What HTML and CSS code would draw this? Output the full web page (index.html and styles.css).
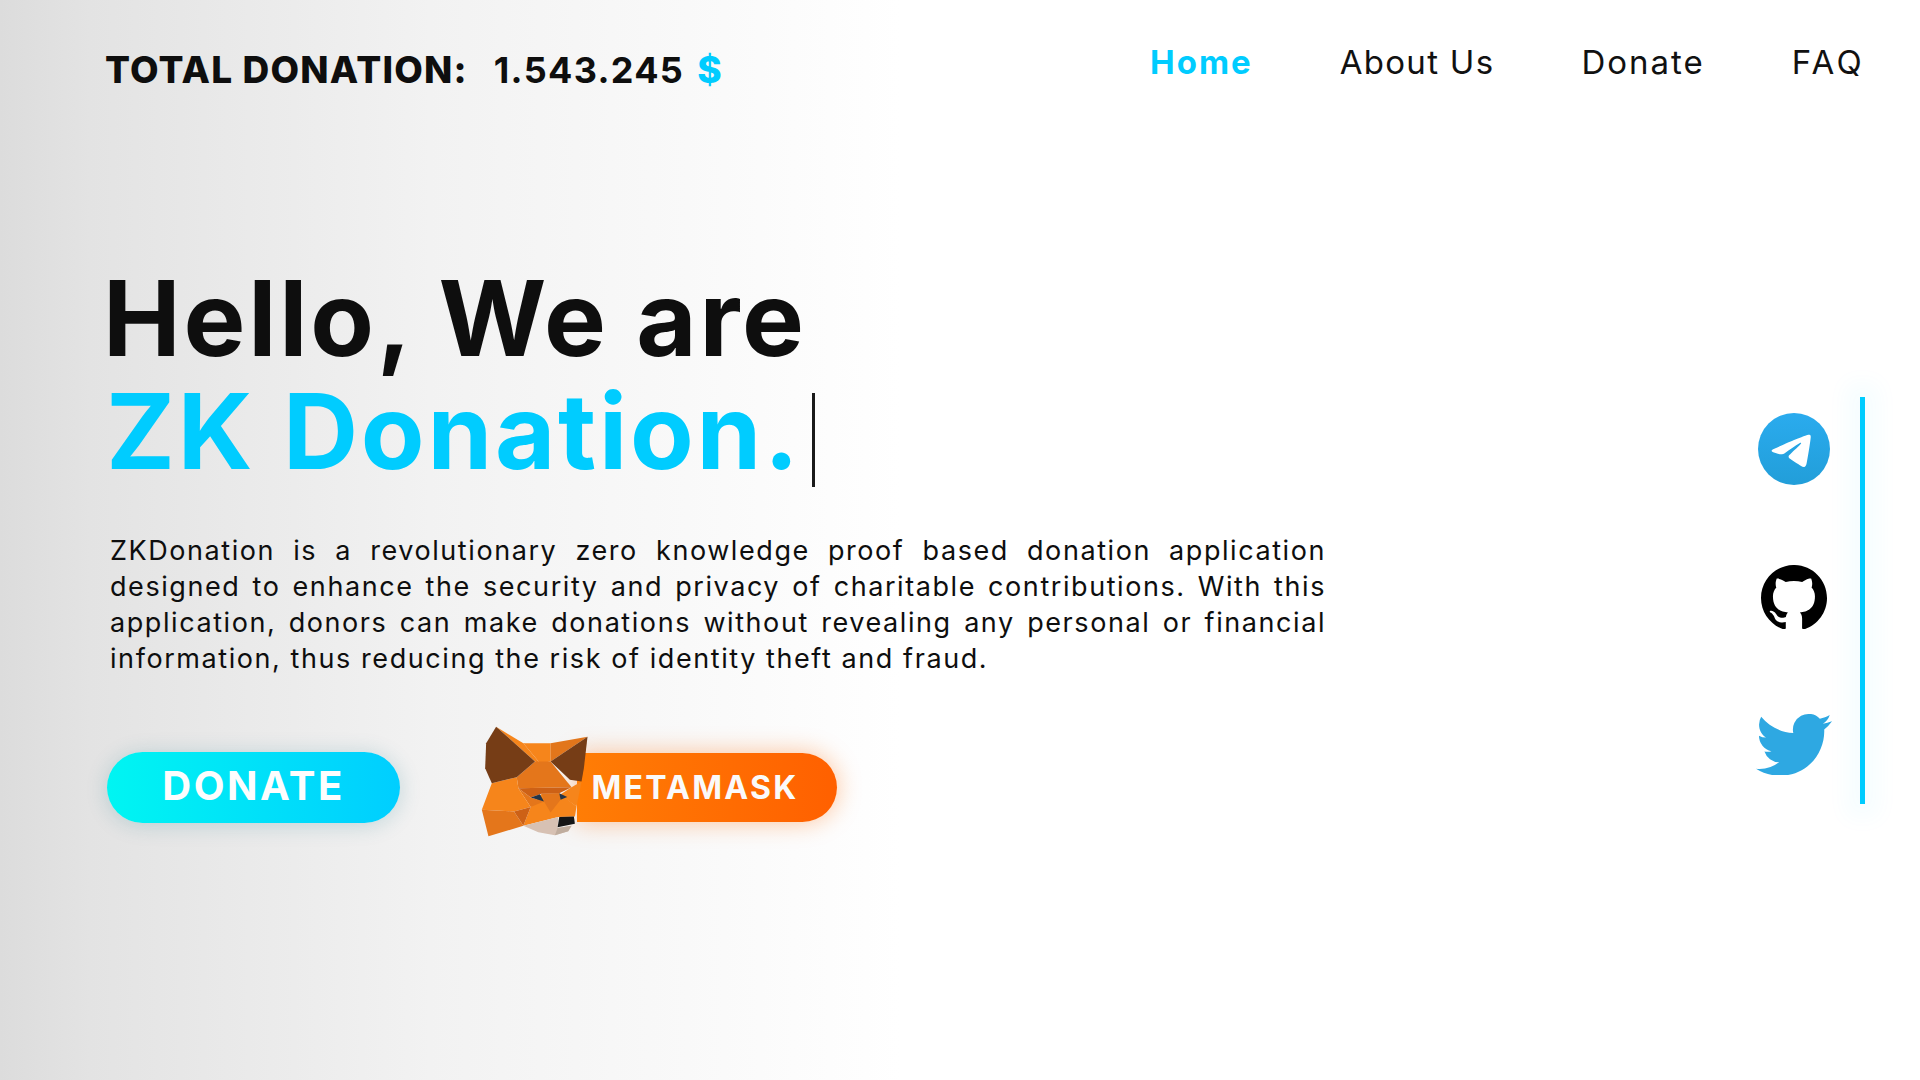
FILE: index.html
```html
<!DOCTYPE html>
<html lang="en">
<head>
<meta charset="utf-8">
<title>ZK Donation</title>
<link rel="stylesheet" href="styles.css">
</head>
<body>
<div class="page">
  <header class="topbar">
    <div class="total"><span class="total-label">TOTAL DONATION:</span><span class="total-value">1.543.245</span><span class="accent total-cur">$</span></div>
    <nav class="nav">
      <a class="nav-link is-active">Home</a>
      <a class="nav-link">About Us</a>
      <a class="nav-link nav-link-donate">Donate</a>
      <a class="nav-link nav-link-faq">FAQ</a>
    </nav>
  </header>
  <div class="hero">
    <main class="hero-main">
      <h1 class="title">Hello, We are<br><span class="accent title-second">ZK Donation.</span><span class="caret"></span></h1>
      <p class="lead">ZKDonation is a revolutionary zero knowledge proof based donation application designed to enhance the security and privacy of charitable contributions. With this application, donors can make donations without revealing any personal or financial information, thus reducing the risk of identity theft and fraud.</p>
      <div class="actions">
        <a class="btn-donate"><span class="btn-donate-label">DONATE</span></a>
        <div class="mm">
          <svg class="fox" viewBox="60 75 330 340" aria-hidden="true">
            <polygon fill="#f6851b" points="108,80 190,130 240,190 225,185"/>
            <polygon fill="#f6851b" points="190,130 272,130 272,185 240,190"/>
            <polygon fill="#e2761b" points="272,130 383,110 272,185"/>
            <polygon fill="#e4761b" points="225,185 272,185 335,262 175,265 170,232"/>
            <polygon fill="#f6851b" points="335,262 365,245 350,320 300,285"/>
            <polygon fill="#f6851b" points="212,322 245,282 298,280 350,320 345,350 295,352 190,378"/>
            <polygon fill="#e4761b" points="175,265 212,293 252,305 212,322"/>
            <polygon fill="#e4761b" points="245,282 298,280 302,300 272,338 252,305"/>
            <polygon fill="#cd6116" points="175,265 335,262 298,280 245,282 212,293"/>
            <polygon fill="#f6851b" points="95,250 170,232 175,265 212,322 162,335 65,330"/>
            <polygon fill="#e4761b" points="65,330 162,335 190,378 85,410"/>
            <polygon fill="#cd6116" points="162,335 212,322 190,378"/>
            <polygon fill="#763d16" points="108,80 225,185 170,232 95,250 85,228 75,205 78,130"/>
            <polygon fill="#763d16" points="383,110 272,185 330,240 365,245 372,205"/>
            <polygon fill="#233447" points="212,293 240,283 252,305"/>
            <polygon fill="#233447" points="298,280 322,292 302,300"/>
            <polygon fill="#d7c1b3" points="190,378 295,352 293,385 335,378 325,395 285,407 235,398"/>
            <polygon fill="#c0ad9e" points="293,385 335,378 325,395 285,407"/>
            <polygon fill="#161616" points="298,352 342,350 345,372 293,383"/>
          </svg>
          <a class="btn-mm">METAMASK</a>
        </div>
      </div>
    </main>
    <aside class="socials">
      <div class="social-icons">
      <svg class="ico-tg" viewBox="0 0 240 240" aria-hidden="true">
        <defs><linearGradient id="tg" x1="0" y1="0" x2="0" y2="1"><stop offset="0" stop-color="#2aabee"/><stop offset="1" stop-color="#229ed9"/></linearGradient></defs>
        <circle cx="120" cy="120" r="120" fill="url(#tg)"/>
        <path fill="#fff" d="M54.3 118.8c35-15.2 58.3-25.3 70-30.2 33.3-13.9 40.3-16.3 44.8-16.4 1 0 3.2.2 4.7 1.4 1.2 1 1.5 2.3 1.7 3.3s.4 3.1.2 4.7c-1.8 19-9.6 65.1-13.6 86.3-1.7 9-5 12-8.2 12.3-7 .6-12.3-4.6-19-9-10.6-6.9-16.5-11.2-26.8-18-11.9-7.8-4.2-12.1 2.6-19.1 1.8-1.8 32.5-29.8 33.1-32.3.1-.3.1-1.5-.6-2.1-.7-.6-1.7-.4-2.5-.2-1.1.2-17.9 11.4-50.6 33.5-4.8 3.3-9.1 4.9-13 4.8-4.3-.1-12.5-2.4-18.7-4.4-7.5-2.4-13.5-3.7-13-7.9.3-2.2 3.3-4.4 8.9-6.7z"/>
      </svg>
      <svg class="ico-gh" viewBox="0 0.3 24 23.3" preserveAspectRatio="xMidYMin slice" aria-hidden="true">
        <path fill="#000" d="M12 .297c-6.63 0-12 5.373-12 12 0 5.303 3.438 9.8 8.205 11.385.6.113.82-.258.82-.577 0-.285-.01-1.04-.015-2.04-3.338.724-4.042-1.61-4.042-1.61C4.422 18.07 3.633 17.7 3.633 17.7c-1.087-.744.084-.729.084-.729 1.205.084 1.838 1.236 1.838 1.236 1.07 1.835 2.809 1.305 3.495.998.108-.776.417-1.305.76-1.605-2.665-.3-5.466-1.332-5.466-5.93 0-1.31.465-2.38 1.235-3.22-.135-.303-.54-1.523.105-3.176 0 0 1.005-.322 3.3 1.23.96-.267 1.98-.399 3-.405 1.02.006 2.04.138 3 .405 2.28-1.552 3.285-1.23 3.285-1.23.645 1.653.24 2.873.12 3.176.765.84 1.23 1.91 1.23 3.22 0 4.61-2.805 5.625-5.475 5.92.42.36.81 1.096.81 2.22 0 1.606-.015 2.896-.015 3.286 0 .315.21.69.825.57C20.565 22.092 24 17.592 24 12.297c0-6.627-5.373-12-12-12"/>
      </svg>
      <svg class="ico-tw" viewBox="0 2 24 19.5" aria-hidden="true">
        <path fill="#2ea8e2" d="M23.953 4.57a10 10 0 01-2.825.775 4.958 4.958 0 002.163-2.723c-.951.555-2.005.959-3.127 1.184a4.92 4.92 0 00-8.384 4.482C7.69 8.095 4.067 6.13 1.64 3.162a4.822 4.822 0 00-.666 2.475c0 1.71.87 3.213 2.188 4.096a4.904 4.904 0 01-2.228-.616v.06a4.923 4.923 0 003.946 4.827 4.996 4.996 0 01-2.212.085 4.936 4.936 0 004.604 3.417 9.867 9.867 0 01-6.102 2.105c-.39 0-.779-.023-1.17-.067a13.995 13.995 0 007.557 2.209c9.053 0 13.998-7.496 13.998-13.985 0-.21 0-.42-.015-.63A9.935 9.935 0 0024 4.59z"/>
      </svg>
      </div>
      <div class="rail-line"></div>
    </aside>
  </div>
</div>
</body>
</html>
```
FILE: styles.css
```css
* { box-sizing: border-box; }
html, body { margin: 0; height: 100%; }
body {
  font-family: Inter, "Liberation Sans", sans-serif;
  color: #0e0e0e;
  background: linear-gradient(90deg, #dcdcdc 0, #e3e3e3 90px, #f2f2f2 430px, #fbfbfb 760px, #ffffff 900px);
  overflow: hidden;
}
.page { width: 1920px; height: 1080px; display: flex; flex-direction: column; }
.accent { color: #00ccff; }

.topbar { display: flex; justify-content: space-between; align-items: flex-start; padding: 41px 55px 0 105px; height: 262px; }
.total { display: flex; align-items: center; font-weight: 800; font-size: 37px; margin-top: 6px; }
.total-label { letter-spacing: 1.2px; }
.total-value { margin-left: 26px; font-size: 36px; font-weight: 700; letter-spacing: 1.3px; }
.total-cur { margin-left: 13px; font-size: 37px; font-weight: 800; }
.nav { display: flex; gap: 87px; font-size: 33px; line-height: 42px; }
.nav-link { color: #111; letter-spacing: 1.3px; }
.nav-link-donate { letter-spacing: 2px; }
.nav-link-faq { letter-spacing: 3.3px; }
.nav-link.is-active { color: #00ccff; font-weight: 700; letter-spacing: 2px; }

.hero { flex: 1; display: flex; justify-content: space-between; align-items: flex-start; padding-right: 55px; }
.hero-main { padding-left: 103px; }
.title { margin: 0; font-size: 104px; line-height: 113px; font-weight: 700; letter-spacing: 2.8px; }
.title-second { padding-left: 3px; }
.caret { display: inline-block; width: 3px; height: 94px; margin-left: 10px; background: #1a1a1a; vertical-align: -18px; }
.lead { width: 1216px; margin: 45px 0 0 7px; font-size: 27px; line-height: 36px; letter-spacing: 1.57px; text-align: justify; }

.actions { display: flex; align-items: center; margin: 75px 0 0 4px; }
.btn-donate { display: flex; align-items: center; justify-content: center; width: 293px; height: 71px; border-radius: 36px; background: linear-gradient(90deg, #00f5f2, #00ceff); color: #fdfdfd; font-size: 40px; font-weight: 700; letter-spacing: 2.5px; box-shadow: 0 2px 22px rgba(0, 110, 130, 0.2); }
.btn-donate-label { margin-bottom: 4px; }
.mm { position: relative; margin-left: 177px; }
.btn-mm { display: flex; align-items: center; justify-content: center; width: 260px; height: 69px; padding-right: 24px; border-radius: 0 35px 35px 0; background: linear-gradient(90deg, #ff7d05, #ff6000); color: #fafafa; font-size: 32px; font-weight: 700; letter-spacing: 2.3px; box-shadow: 0 0 24px rgba(255, 110, 10, 0.4); }
.fox { position: absolute; left: -97px; top: -28px; width: 110px; height: 113px; z-index: 1; }

.socials { display: flex; gap: 28px; margin-top: 135px; }
.social-icons { display: flex; flex-direction: column; align-items: center; justify-content: space-between; height: 407px; padding: 16px 0 29px; }
.rail-line { width: 5px; height: 407px; background: #00ccff; box-shadow: 0 0 22px 14px rgba(0, 200, 255, 0.04); }
.ico-tg { width: 72px; height: 72px; }
.ico-gh { width: 66px; height: 64px; margin-top: -4px; }
.ico-tw { width: 76px; height: 62px; }
```
